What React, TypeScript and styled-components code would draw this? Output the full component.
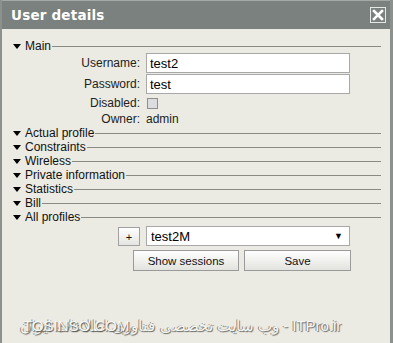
import React from "react";
import styled, { createGlobalStyle } from "styled-components";

const Global = createGlobalStyle`
  html, body { margin: 0; padding: 0; }
  body {
    width: 393px;
    height: 343px;
    overflow: hidden;
    background: #ebebe3;
    font-family: "Liberation Sans", Arial, sans-serif;
  }
`;

const Window = styled.div`
  position: relative;
  width: 393px;
  height: 343px;
  box-sizing: border-box;
  display: flex;
  flex-direction: column;
  background: #ebebe3;
  border-left: 2px solid #8c918e;
  border-right: 3px solid #8c918e;
  overflow: hidden;
`;

const TitleBar = styled.div`
  height: 29px;
  flex: none;
  margin: 0 -3px 0 -2px;
  background: #7b817e;
  border-top: 1px solid #a4a9a6;
  box-sizing: border-box;
  display: flex;
  align-items: center;
  justify-content: space-between;
  padding: 0 7px 0 11px;
`;

const Title = styled.div`
  color: #ffffff;
  font-family: "DejaVu Sans", Verdana, sans-serif;
  font-weight: bold;
  font-size: 13.5px;
  letter-spacing: 0.2px;
  margin-top: 0px;
`;

const CloseBox = styled.div`
  width: 16px;
  height: 16px;
  box-sizing: border-box;
  border: 1px solid #e6e8e6;
  display: flex;
  align-items: center;
  justify-content: center;
  margin-top: -1px;
`;

const Body = styled.div`
  flex: 1;
  padding: 10px 9px 0 11px;
  display: flex;
  flex-direction: column;
`;

const SectionRow = styled.div`
  height: 14px;
  display: flex;
  align-items: center;
  color: #111;
  font-size: 12px;
`;

const Tri = styled.span`
  width: 0;
  height: 0;
  border-left: 4px solid transparent;
  border-right: 4px solid transparent;
  border-top: 5px solid #000;
  margin-right: 4px;
  flex: none;
`;

const SectionLine = styled.span`
  flex: 1;
  height: 0;
  border-top: 1px solid #8a8a84;
  margin-left: 1px;
  margin-top: 1px;
`;

const FieldGrid = styled.div`
  display: grid;
  grid-template-columns: 127px 204px;
  column-gap: 6px;
  grid-template-rows: 20px 20px 16px 14px;
  row-gap: 1px;
  align-items: center;
  margin-bottom: 0px;
`;

const Label = styled.div`
  text-align: right;
  font-size: 12px;
  color: #222;
`;

const Input = styled.div`
  height: 20px;
  box-sizing: border-box;
  background: #fff;
  border: 1px solid #a8a8a8;
  font-size: 13px;
  color: #000;
  padding: 0 3px;
  display: flex;
  align-items: center;
`;

const Check = styled.div`
  width: 11px;
  height: 11px;
  box-sizing: border-box;
  border: 1px solid #8e8e8e;
  background: #dcdce0;
  margin-left: 1px;
`;

const Value = styled.div`
  font-size: 12px;
  color: #222;
`;

const ProfileRow = styled.div`
  display: grid;
  grid-template-columns: 22px 204px;
  column-gap: 6px;
  margin: 2px 0 0 105px;
  height: 20px;
`;

const SmallButton = styled.div`
  box-sizing: border-box;
  height: 19px;
  border: 1px solid #a0a0a0;
  background: linear-gradient(#ffffff, #e4e4e0);
  display: flex;
  align-items: center;
  justify-content: center;
  font-size: 11px;
  color: #111;
  margin-top: 1px;
`;

const Select = styled.div`
  box-sizing: border-box;
  height: 20px;
  border: 1px solid #a8a8a8;
  background: #fff;
  display: flex;
  align-items: center;
  justify-content: space-between;
  padding: 0 6px 0 4px;
  font-size: 13px;
  color: #000;
`;

const Arrow = styled.span`
  font-size: 9px;
  color: #000;
`;

const ButtonRow = styled.div`
  display: grid;
  grid-template-columns: 106px 107px;
  column-gap: 5px;
  margin: 4px 0 0 120px;
`;

const Button = styled.div`
  box-sizing: border-box;
  height: 21px;
  border: 1px solid #9a9a9a;
  background: linear-gradient(#ffffff, #e2e2de);
  display: flex;
  align-items: center;
  justify-content: center;
  font-size: 11.5px;
  color: #111;
`;

const Watermark = styled.div`
  position: absolute;
  left: 18px;
  top: 317px;
  font-size: 15px;
  color: #f6f6f2;
  text-shadow: 1px 1px 1px #6a6a66, -1px 0 0 #8a8a86;
  white-space: nowrap;
  font-family: "Liberation Sans", "Noto Sans", sans-serif;
  direction: ltr;
`;

const Watermark2 = styled.div`
  position: absolute;
  left: 21px;
  top: 317px;
  font-size: 15px;
  color: #f6f6f2;
  text-shadow: 1px 1px 1px #5a5a56;
  white-space: nowrap;
  font-family: "Liberation Sans", sans-serif;
`;

const sections = [
  "Actual profile",
  "Constraints",
  "Wireless",
  "Private information",
  "Statistics",
  "Bill",
  "All profiles",
];

function Section({ name }: { name: string }) {
  return (
    <SectionRow>
      <Tri />
      <span>{name}</span>
      <SectionLine />
    </SectionRow>
  );
}

export default function App() {
  return (
    <>
      <Global />
      <Window>
        <TitleBar>
          <Title>User details</Title>
          <CloseBox>
            <svg width="12" height="12" viewBox="0 0 12 12">
              <path d="M2 2 L10 10 M10 2 L2 10" stroke="#ffffff" strokeWidth="2.6" strokeLinecap="square" />
            </svg>
          </CloseBox>
        </TitleBar>
        <Body>
          <Section name="Main" />
          <FieldGrid>
            <Label>Username:</Label>
            <Input>test2</Input>
            <Label>Password:</Label>
            <Input>test</Input>
            <Label>Disabled:</Label>
            <Check />
            <Label>Owner:</Label>
            <Value>admin</Value>
          </FieldGrid>
          {sections.map((s) => (
            <Section key={s} name={s} />
          ))}
          <ProfileRow>
            <SmallButton>+</SmallButton>
            <Select>
              <span>test2M</span>
              <Arrow>▼</Arrow>
            </Select>
          </ProfileRow>
          <ButtonRow>
            <Button>Show sessions</Button>
            <Button>Save</Button>
          </ButtonRow>
        </Body>
        <Watermark>
          <span dir="rtl">{"ITPro.ir - وب سایت تخصصی فناوری اطلاعات ایران"}</span>
        </Watermark>
        <Watermark2>TOSINSO.COM</Watermark2>
      </Window>
    </>
  );
}
